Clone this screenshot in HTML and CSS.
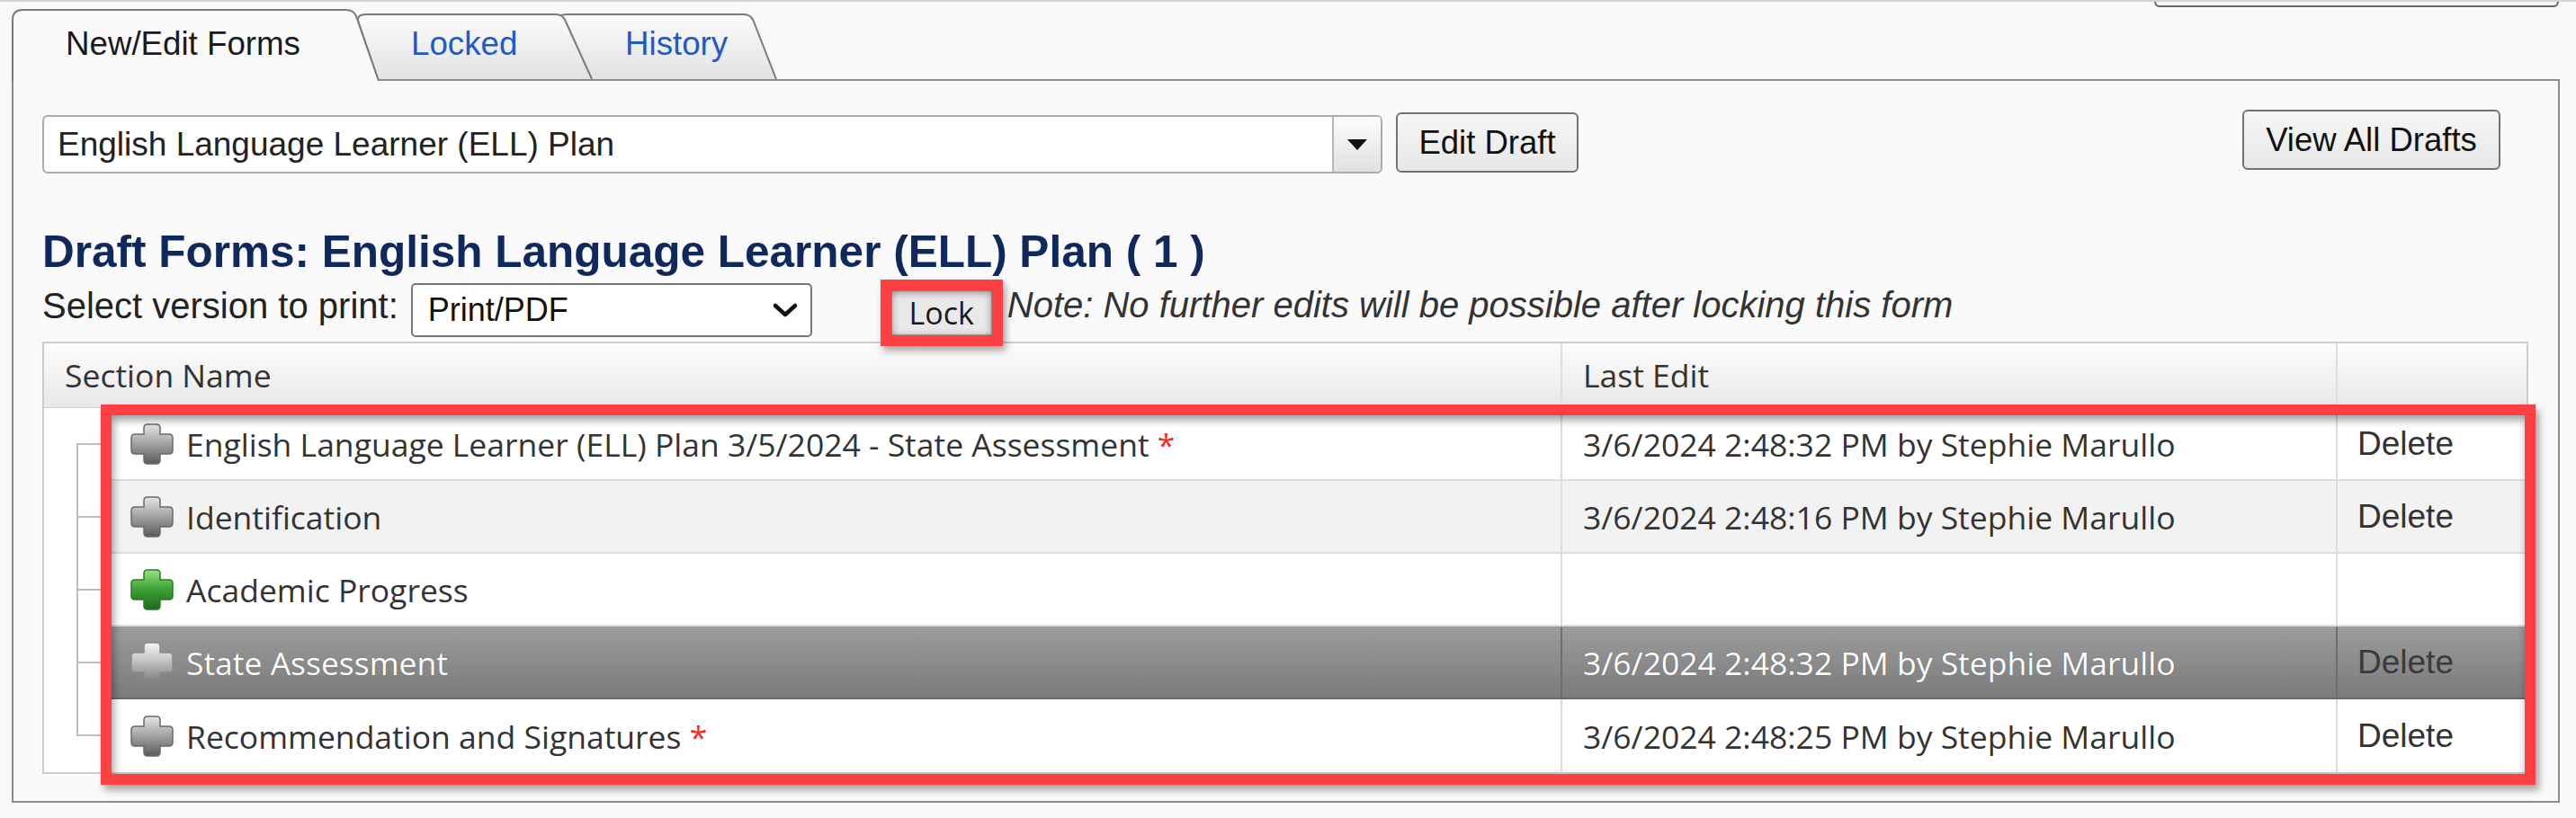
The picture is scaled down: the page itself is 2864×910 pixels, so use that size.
FILE: index.html
```html
<!DOCTYPE html>
<html lang="en">
<head>
<meta charset="utf-8">
<title>Draft Forms</title>
<link rel="stylesheet" href="styles.css">
</head>
<body>
<div class="page">
  <div class="topstrip"><div class="cut-btn"></div></div>

  <div class="tabs">
    <div class="tab tab-active">
      <svg class="tab-shape" width="410" height="80" viewBox="0 0 410 80"><path d="M1,80 L1,12 Q1,1 12,1 L372,1 Q380,1 383,8 L408,80" fill="#fafafa" stroke="#7a7a7a" stroke-width="2"/></svg>
      <span class="tab-label label-active">New/Edit Forms</span>
    </div>
    <div class="tab tab-locked">
      <svg class="tab-shape" width="263" height="73" viewBox="0 0 263 73"><defs><linearGradient id="tg1" x1="0" y1="0" x2="0" y2="1"><stop offset="0" stop-color="#fbfbfb"/><stop offset="1" stop-color="#e2e2e2"/></linearGradient></defs><path d="M23,73 L1,8 Q0,1 10,1 L221,1 Q229,1 232,9 L261,73" fill="url(#tg1)" stroke="#7a7a7a" stroke-width="2"/></svg>
      <span class="tab-label label-link">Locked</span>
    </div>
    <div class="tab tab-history">
      <svg class="tab-shape" width="245" height="73" viewBox="0 0 245 73"><defs><linearGradient id="tg2" x1="0" y1="0" x2="0" y2="1"><stop offset="0" stop-color="#fbfbfb"/><stop offset="1" stop-color="#e2e2e2"/></linearGradient></defs><path d="M25,73 L1,8 Q0,1 10,1 L207,1 Q215,1 218,9 L243,73" fill="url(#tg2)" stroke="#7a7a7a" stroke-width="2"/></svg>
      <span class="tab-label label-link label-history">History</span>
    </div>
  </div>

  <div class="panel">
    <div class="form-row">
      <div class="combo">
        <span class="combo-text">English Language Learner (ELL) Plan</span>
        <span class="combo-btn"><span class="tri"></span></span>
      </div>
      <button class="btn btn-edit">Edit Draft</button>
      <button class="btn btn-view">View All Drafts</button>
    </div>

    <h2 class="draft-title">Draft Forms: English Language Learner (ELL) Plan ( 1 )</h2>

    <div class="version-row">
      <span class="version-label">Select version to print:</span>
      <div class="print-select">
        <span>Print/PDF</span>
        <svg class="chev" width="30" height="18" viewBox="0 0 30 18"><polyline points="4,4 15,14 26,4" fill="none" stroke="#111" stroke-width="4.5" stroke-linecap="round" stroke-linejoin="round"/></svg>
      </div>
      <span class="lock-wrap"><button class="btn-lock">Lock</button></span>
      <span class="note">Note: No further edits will be possible after locking this form</span>
    </div>

    <div class="grid">
      <div class="grid-head">
        <div class="th th-name">Section Name</div>
        <div class="th th-date">Last Edit</div>
        <div class="th th-del"></div>
      </div>
      <div class="grid-body">
        <div class="row row-first">
          <div class="gutter"></div>
          <div class="cell c-name">
            <svg class="plus" width="48" height="46" viewBox="0 0 48 46"><defs><linearGradient id="pg1" x1="0" y1="0" x2="0" y2="1"><stop offset="0" stop-color="#e6e6e6"/><stop offset="0.45" stop-color="#a8a8a8"/><stop offset="1" stop-color="#5a5a5a"/></linearGradient></defs><path d="M19,1 H29 Q33,1 33,5 V12 H43 Q47,12 47,16 V30 Q47,34 43,34 H33 V41 Q33,45 29,45 H19 Q15,45 15,41 V34 H5 Q1,34 1,30 V16 Q1,12 5,12 H15 V5 Q15,1 19,1 Z" fill="url(#pg1)" stroke="#6a6a6a" stroke-width="1.5"/></svg>
            <span>English Language Learner (ELL) Plan 3/5/2024 - State Assessment <span class="req">*</span></span>
          </div>
          <div class="cell c-date">3/6/2024 2:48:32 PM by Stephie Marullo</div>
          <div class="cell c-del">Delete</div>
        </div>
        <div class="row row-alt">
          <div class="gutter"></div>
          <div class="cell c-name">
            <svg class="plus" width="48" height="46" viewBox="0 0 48 46"><defs><linearGradient id="pg2" x1="0" y1="0" x2="0" y2="1"><stop offset="0" stop-color="#e6e6e6"/><stop offset="0.45" stop-color="#a8a8a8"/><stop offset="1" stop-color="#5a5a5a"/></linearGradient></defs><path d="M19,1 H29 Q33,1 33,5 V12 H43 Q47,12 47,16 V30 Q47,34 43,34 H33 V41 Q33,45 29,45 H19 Q15,45 15,41 V34 H5 Q1,34 1,30 V16 Q1,12 5,12 H15 V5 Q15,1 19,1 Z" fill="url(#pg2)" stroke="#6a6a6a" stroke-width="1.5"/></svg>
            <span>Identification</span>
          </div>
          <div class="cell c-date">3/6/2024 2:48:16 PM by Stephie Marullo</div>
          <div class="cell c-del">Delete</div>
        </div>
        <div class="row">
          <div class="gutter"></div>
          <div class="cell c-name">
            <svg class="plus" width="48" height="46" viewBox="0 0 48 46"><defs><linearGradient id="pg3" x1="0" y1="0" x2="0" y2="1"><stop offset="0" stop-color="#9be486"/><stop offset="0.45" stop-color="#3fa638"/><stop offset="1" stop-color="#1c6b19"/></linearGradient></defs><path d="M19,1 H29 Q33,1 33,5 V12 H43 Q47,12 47,16 V30 Q47,34 43,34 H33 V41 Q33,45 29,45 H19 Q15,45 15,41 V34 H5 Q1,34 1,30 V16 Q1,12 5,12 H15 V5 Q15,1 19,1 Z" fill="url(#pg3)" stroke="#2a7a25" stroke-width="1.5"/></svg>
            <span>Academic Progress</span>
          </div>
          <div class="cell c-date"></div>
          <div class="cell c-del"></div>
        </div>
        <div class="row row-sel">
          <div class="gutter"></div>
          <div class="cell c-name">
            <svg class="plus" width="48" height="46" viewBox="0 0 48 46"><defs><linearGradient id="pg4" x1="0" y1="0" x2="0" y2="1"><stop offset="0" stop-color="#f6f6f6"/><stop offset="0.45" stop-color="#c4c4c4"/><stop offset="1" stop-color="#7c7c7c"/></linearGradient></defs><path d="M19,1 H29 Q33,1 33,5 V12 H43 Q47,12 47,16 V30 Q47,34 43,34 H33 V41 Q33,45 29,45 H19 Q15,45 15,41 V34 H5 Q1,34 1,30 V16 Q1,12 5,12 H15 V5 Q15,1 19,1 Z" fill="url(#pg4)" stroke="#8a8a8a" stroke-width="1.5"/></svg>
            <span>State Assessment</span>
          </div>
          <div class="cell c-date">3/6/2024 2:48:32 PM by Stephie Marullo</div>
          <div class="cell c-del">Delete</div>
        </div>
        <div class="row row-last">
          <div class="gutter"></div>
          <div class="cell c-name">
            <svg class="plus" width="48" height="46" viewBox="0 0 48 46"><defs><linearGradient id="pg5" x1="0" y1="0" x2="0" y2="1"><stop offset="0" stop-color="#e6e6e6"/><stop offset="0.45" stop-color="#a8a8a8"/><stop offset="1" stop-color="#5a5a5a"/></linearGradient></defs><path d="M19,1 H29 Q33,1 33,5 V12 H43 Q47,12 47,16 V30 Q47,34 43,34 H33 V41 Q33,45 29,45 H19 Q15,45 15,41 V34 H5 Q1,34 1,30 V16 Q1,12 5,12 H15 V5 Q15,1 19,1 Z" fill="url(#pg5)" stroke="#6a6a6a" stroke-width="1.5"/></svg>
            <span>Recommendation and Signatures <span class="req">*</span></span>
          </div>
          <div class="cell c-date">3/6/2024 2:48:25 PM by Stephie Marullo</div>
          <div class="cell c-del">Delete</div>
        </div>
        <div class="annot"></div>
      </div>
    </div>
  </div>
</div>
</body>
</html>
```

FILE: styles.css
```css
* { box-sizing: border-box; }

html, body {
  margin: 0;
  padding: 0;
  background: #f8f8f8;
}

body {
  width: 2864px;
  height: 910px;
  overflow: hidden;
  font-family: "Liberation Sans", Arial, sans-serif;
  color: #222;
}

.page {
  border-top: 2px solid #d4d4d4;
}

/* cut-off element at top right */
.topstrip {
  height: 8px;
  display: flex;
  justify-content: flex-end;
  padding-right: 19px;
}
.cut-btn {
  width: 450px;
  height: 6px;
  border: 2px solid #666;
  border-top: none;
  border-radius: 0 0 6px 6px;
  background: #f4f4f4;
}

/* tabs */
.tabs {
  position: relative;
  z-index: 2;
  display: flex;
  align-items: flex-start;
  height: 80px;
  margin-bottom: -2px;
  padding-left: 13px;
}
.tab {
  position: relative;
  flex: none;
}
.tab-shape {
  position: absolute;
  left: 0;
  top: 0;
  display: block;
}
.tab-active { width: 410px; height: 80px; z-index: 3; }
.tab-locked { width: 263px; height: 73px; margin-top: 5px; margin-left: -26px; z-index: 2; }
.tab-history { width: 245px; height: 73px; margin-top: 5px; margin-left: -40px; z-index: 1; }

.tab-label {
  position: relative;
  display: block;
  font-size: 36.7px;
  line-height: 42px;
  white-space: nowrap;
  padding-left: 60px;
  padding-top: 13px;
}
.label-active { padding-top: 18px; color: #1a1a1a; }
.label-link { color: #1f5ac4; }
.label-history { padding-left: 75px; }

/* panel */
.panel {
  margin: 0 18px 0 13px;
  border: 2px solid #8c8c8c;
  background: #fafafa;
  padding: 0 33px 30px 32px;
}

.form-row {
  display: flex;
  align-items: flex-start;
  padding-top: 32px;
}
.combo {
  margin-top: 6px;
  width: 1490px;
  height: 65px;
  border: 2px solid #ababab;
  border-radius: 6px;
  background: #fff;
  display: flex;
  overflow: hidden;
}
.combo-text {
  flex: 1;
  padding-left: 15px;
  font-size: 37px;
  line-height: 61px;
  color: #222;
  white-space: nowrap;
}
.combo-btn {
  width: 54px;
  border-left: 2px solid #b8b8b8;
  background: linear-gradient(#fdfdfd, #e0e0e0);
  display: flex;
  align-items: center;
  justify-content: center;
}
.tri {
  width: 0;
  height: 0;
  border-left: 11px solid transparent;
  border-right: 11px solid transparent;
  border-top: 12px solid #111;
}

.btn {
  font-family: "Liberation Sans", Arial, sans-serif;
  font-size: 36.5px;
  color: #111;
  border: 2px solid #737373;
  border-radius: 6px;
  background: linear-gradient(#f6f6f6, #e7e7e7);
  padding: 0;
  height: 67px;
}
.btn-edit { margin-left: 15px; margin-top: 3px; width: 203px; }
.btn-view { margin-left: auto; margin-right: 31px; width: 287px; }

.draft-title {
  margin: 59px 0 0;
  font-size: 49.5px;
  line-height: 56px;
  font-weight: bold;
  color: #10295c;
  white-space: nowrap;
}

.version-row {
  margin-top: 7px;
  height: 65px;
  display: flex;
  align-items: flex-start;
}
.version-label {
  margin-top: 2px;
  font-size: 40px;
  line-height: 46px;
  color: #222;
  white-space: nowrap;
}
.print-select {
  margin-left: 14px;
  width: 446px;
  height: 60px;
  border: 2px solid #767676;
  border-radius: 5px;
  background: #fff;
  display: flex;
  align-items: center;
  justify-content: space-between;
  padding: 0 13px 0 17px;
  font-size: 36px;
  color: #111;
}
.chev { display: block; }

.lock-wrap {
  position: relative;
  display: block;
  margin-left: 88px;
  margin-top: 8px;
}
.btn-lock {
  display: block;
  width: 112px;
  height: 50px;
  padding: 0;
  font-family: "Open Sans", "Noto Sans", sans-serif;
  font-size: 34px;
  line-height: 1;
  color: #1a1a1a;
  background: #e9e9e9;
  border: 1px solid #adadad;
}
.lock-wrap::after {
  content: "";
  position: absolute;
  inset: -12px;
  border: 12px solid #ff4042;
  box-shadow: 3px 5px 8px rgba(0,0,0,0.35), inset 0 2px 10px rgba(0,0,0,0.45);
  pointer-events: none;
}
.note {
  margin-left: 17px;
  margin-top: 1px;
  font-size: 40px;
  line-height: 46px;
  font-style: italic;
  color: #333;
  white-space: nowrap;
}

/* grid */
.grid {
  border: 2px solid #cdcdcd;
  background: #fff;
  font-family: "Open Sans", "Noto Sans", sans-serif;
  font-size: 35.5px;
  color: #333;
}
.grid-head {
  display: grid;
  grid-template-columns: 1686px 862px 1fr;
  height: 72px;
  background: linear-gradient(#fcfcfc, #e8e8e8);
  border-bottom: 1px solid #cfcfcf;
}
.th {
  line-height: 70px;
  white-space: nowrap;
}
.th-name { padding-left: 23px; }
.th-date { padding-left: 23px; border-left: 2px solid #dedede; }
.th-del { border-left: 2px solid #dedede; }

.grid-body { position: relative; }

.row {
  display: grid;
  grid-template-columns: 65px 1621px 862px 1fr;
  height: 81px;
}
.gutter {
  position: relative;
  background: #fff;
}
.gutter::before {
  content: "";
  position: absolute;
  left: 36px;
  width: 2px;
  top: 0;
  bottom: 0;
  background: #bdbdbd;
}
.gutter::after {
  content: "";
  position: absolute;
  left: 36px;
  right: 0;
  top: calc(50% - 2px);
  height: 2px;
  background: #bdbdbd;
}
.row-first .gutter::before { top: calc(50% - 2px); }
.row-last .gutter::before { bottom: calc(50% + 0px); }

.cell {
  display: flex;
  align-items: center;
  border-bottom: 2px solid #dcdcdc;
  white-space: nowrap;
}
.row-last .cell { border-bottom: none; }
.c-name { padding-left: 31px; gap: 14px; }
.plus { display: block; flex: none; }
.c-date { padding-left: 23px; border-left: 2px solid #dcdcdc; }
.c-del {
  padding-left: 22px;
  border-left: 2px solid #dcdcdc;
  font-family: "Liberation Sans", Arial, sans-serif;
  font-size: 37px;
  color: #333;
}
.req { color: #ff2424; }

.row-alt .cell { background: #f2f2f2; }
.row-sel .cell {
  background: linear-gradient(#9c9c9c, #7b7b7b);
  border-bottom-color: #6a6a6a;
  border-left-color: #6e6e6e;
  color: #fff;
  text-shadow: 0 0 1px rgba(0,0,0,0.35);
}
.row-sel .c-del { color: #3a3a3a; text-shadow: none; }

.annot {
  position: absolute;
  left: 63px;
  top: -4px;
  right: -10px;
  bottom: -14px;
  border: 12px solid #ff4042;
  box-shadow: 4px 6px 8px rgba(0,0,0,0.35), inset 2px 5px 10px rgba(0,0,0,0.4);
  pointer-events: none;
  z-index: 2;
}
```
